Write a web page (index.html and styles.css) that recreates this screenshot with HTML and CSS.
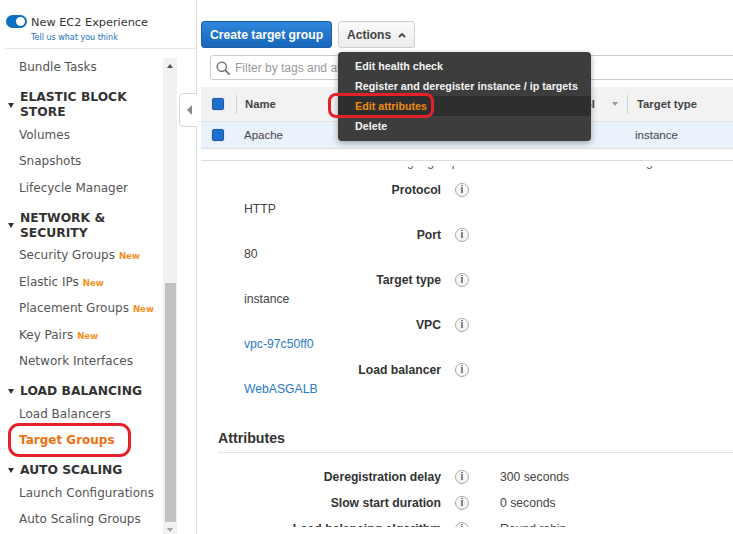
FILE: index.html
```html
<!DOCTYPE html>
<html>
<head>
<meta charset="utf-8">
<link rel="stylesheet" href="styles.css">
</head>
<body>
<div class="app">
  <aside class="sidebar">
    <div class="sb-top">
      <div class="sb-toggle-row">
        <span class="toggle"><span class="knob"></span></span>
        <span class="toggle-label">New EC2 Experience</span>
      </div>
      <div class="feedback">Tell us what you think</div>
    </div>
    <div class="sb-body">
      <nav class="sb-list">
        <div class="item">Bundle Tasks</div>
        <div class="sec"><span class="tri"></span><span class="sec-text">ELASTIC BLOCK STORE</span></div>
        <div class="item">Volumes</div>
        <div class="item">Snapshots</div>
        <div class="item">Lifecycle Manager</div>
        <div class="sec"><span class="tri"></span><span class="sec-text">NETWORK &amp; SECURITY</span></div>
        <div class="item">Security Groups<span class="new">New</span></div>
        <div class="item">Elastic IPs<span class="new">New</span></div>
        <div class="item">Placement Groups<span class="new">New</span></div>
        <div class="item">Key Pairs<span class="new">New</span></div>
        <div class="item">Network Interfaces</div>
        <div class="sec"><span class="tri"></span><span class="sec-text">LOAD BALANCING</span></div>
        <div class="item">Load Balancers</div>
        <div class="item active">Target Groups<span class="annot annot-sb"></span></div>
        <div class="sec"><span class="tri"></span><span class="sec-text">AUTO SCALING</span></div>
        <div class="item">Launch Configurations</div>
        <div class="item">Auto Scaling Groups</div>
      </nav>
      <div class="scrollbar">
        <div class="sc-arrow"><span class="sc-up"></span></div>
        <div class="sc-space"></div>
        <div class="sc-thumb"></div>
        <div class="sc-arrow"><span class="sc-down"></span></div>
      </div>
      <div class="sb-gap"></div>
    </div>
    <div class="collapse-tab"><span class="tab-tri"></span></div>
  </aside>

  <main class="main">
    <div class="toolbar">
      <button class="btn-primary">Create target group</button>
      <div class="actions-wrap">
        <button class="btn">Actions
          <svg class="caret" width="8" height="6" viewBox="0 0 8 6"><path d="M1 5 L4 2 L7 5" fill="none" stroke="#444" stroke-width="1.8"/></svg>
        </button>
        <div class="menu">
          <div class="menu-item">Edit health check</div>
          <div class="menu-item">Register and deregister instance / ip targets</div>
          <div class="menu-item hover">Edit attributes<span class="annot annot-menu"></span></div>
          <div class="menu-item">Delete</div>
        </div>
      </div>
    </div>

    <div class="filter-row">
      <div class="filter">
        <svg class="search" width="14" height="14" viewBox="0 0 14 14"><circle cx="5.8" cy="5.8" r="4.6" fill="none" stroke="#777" stroke-width="1.5"/><path d="M9.2 9.2 L13 13" stroke="#777" stroke-width="1.8" stroke-linecap="round"/></svg>
        <span class="filter-text">Filter by tags and attributes or search by keyword</span>
      </div>
    </div>

    <div class="table">
      <div class="thead">
        <div class="c-check"><span class="checkbox"></span></div>
        <div class="c-name"><span class="divider"></span><span class="th-text">Name</span></div>
        <div class="c-proto"><span class="divider"></span><span class="th-text">Protocol</span><span class="sort"></span></div>
        <div class="c-type"><span class="divider"></span><span class="th-text">Target type</span></div>
      </div>
      <div class="trow">
        <div class="c-check"><span class="checkbox"></span></div>
        <div class="c-name td">Apache</div>
        <div class="c-proto td">HTTP</div>
        <div class="c-type td">instance</div>
      </div>
    </div>

    <div class="details">
      <div class="clip-window"><div class="clip-row">Target group ARN &nbsp; arn:aws:elasticloadbalancing:us-east-1:targetgroup/Apache/9d</div></div>
      <div class="field first">
        <div class="field-label"><span class="label">Protocol</span><span class="info">i</span></div>
        <div class="field-value">HTTP</div>
      </div>
      <div class="field">
        <div class="field-label"><span class="label">Port</span><span class="info">i</span></div>
        <div class="field-value">80</div>
      </div>
      <div class="field">
        <div class="field-label"><span class="label">Target type</span><span class="info">i</span></div>
        <div class="field-value">instance</div>
      </div>
      <div class="field">
        <div class="field-label"><span class="label">VPC</span><span class="info">i</span></div>
        <div class="field-value"><a class="link">vpc-97c50ff0</a></div>
      </div>
      <div class="field">
        <div class="field-label"><span class="label">Load balancer</span><span class="info">i</span></div>
        <div class="field-value"><a class="link">WebASGALB</a></div>
      </div>

      <h3 class="attr-title">Attributes</h3>
      <div class="attrs">
        <div class="attr-row"><span class="label">Deregistration delay</span><span class="info">i</span><span class="attr-val">300 seconds</span></div>
        <div class="attr-row"><span class="label">Slow start duration</span><span class="info">i</span><span class="attr-val">0 seconds</span></div>
        <div class="attr-row"><span class="label">Load balancing algorithm</span><span class="info">i</span><span class="attr-val">Round robin</span></div>
      </div>
    </div>
  </main>
</div>
</body>
</html>
```

FILE: styles.css
```css
* { box-sizing: border-box; }
html, body { margin: 0; padding: 0; }
body {
  width: 733px;
  height: 534px;
  overflow: hidden;
  background: #fff;
  font-family: "Liberation Sans", Arial, sans-serif;
  color: #444;
}
.app { display: flex; height: 534px; }

/* ---------- sidebar ---------- */
.sidebar {
  width: 197px;
  flex: none;
  border-right: 1px solid #dcdcdc;
  position: relative;
  display: flex;
  flex-direction: column;
  font-family: "DejaVu Sans", Verdana, sans-serif;
}
.sb-top {
  height: 49px;
  margin-left: 5px;
  padding-top: 15px;
  border-bottom: 1px solid #e6e6e6;
  flex: none;
}
.sb-toggle-row { display: flex; align-items: center; height: 13px; }
.toggle {
  width: 21px; height: 13px; margin-left: 1px;
  border-radius: 7px; background: #0b6fc1;
  display: flex; align-items: center; justify-content: flex-end;
  padding-right: 2px;
}
.knob { width: 9px; height: 9px; border-radius: 50%; background: #fff; }
.toggle-label { margin-left: 4px; font-size: 11.3px; color: #333; margin-top: 2px; }
.feedback { margin: 4px 0 0 26px; font-size: 8px; line-height: 12px; color: #1b6ec2; }

.sb-body { display: flex; flex: 1; min-height: 0; }
.sb-list { width: 163px; flex: none; padding-top: 5px; overflow: hidden; }
.item {
  height: 26.5px;
  display: flex; align-items: center;
  padding-left: 19px;
  font-size: 12px;
  color: #555;
  white-space: nowrap;
}
.item.active { color: #ec7211; font-weight: bold; position: relative; }
.new { color: #f7901e; font-weight: bold; font-size: 8.6px; margin-left: 4px; margin-top: 2px; }
.sec {
  display: flex; align-items: center;
  padding-left: 8px;
  margin: 9.5px 0 1.5px;
  font-size: 12.3px; line-height: 15px;
  font-weight: bold; color: #333;
}
.tri {
  width: 0; height: 0; flex: none;
  border-left: 3.5px solid transparent;
  border-right: 3.5px solid transparent;
  border-top: 5px solid #333;
  margin-right: 6px;
}
.sec-text { max-width: 140px; }

.annot { position: absolute; border: 3px solid #e4202a; pointer-events: none; }
.annot-sb { left: 8px; top: -4px; width: 123px; height: 34px; border-radius: 11px; }

.scrollbar {
  width: 14px; flex: none;
  margin-top: 9px;
  background: #f1f1f1;
  display: flex; flex-direction: column; align-items: center;
}
.sc-arrow { height: 16px; width: 14px; display: flex; align-items: center; justify-content: center; flex: none; }
.sc-up { width: 0; height: 0; border-left: 3.5px solid transparent; border-right: 3.5px solid transparent; border-bottom: 4px solid #505050; }
.sc-down { width: 0; height: 0; border-left: 3.5px solid transparent; border-right: 3.5px solid transparent; border-top: 4px solid #a3a3a3; }
.sc-space { height: 209px; flex: none; }
.sc-thumb { width: 11px; height: 239px; background: #c1c1c1; flex: none; }
.sb-gap { flex: 1; }

.collapse-tab {
  position: absolute;
  right: -1px; top: 93px;
  width: 18px; height: 34px;
  background: #fff;
  border: 1px solid #d6d6d6;
  border-right: none;
  border-radius: 5px 0 0 5px;
  display: flex; align-items: center; justify-content: center;
}
.tab-tri { width: 0; height: 0; border-top: 5px solid transparent; border-bottom: 5px solid transparent; border-right: 5px solid #8a8a8a; margin-left: 1px; }

/* ---------- main ---------- */
.main { flex: 1; min-width: 0; padding-left: 4px; padding-bottom: 7px; display: flex; flex-direction: column; overflow: hidden; }
.toolbar { display: flex; gap: 6px; padding-top: 21px; position: relative; z-index: 5; flex: none; }
.btn-primary {
  height: 27px; padding: 0 8px;
  background: linear-gradient(#2f87db, #1766ba);
  border: 1px solid #1a5fa8; border-radius: 3px;
  color: #fff; font: bold 12.2px "Liberation Sans", Arial, sans-serif;
}
.actions-wrap { position: relative; }
.btn {
  height: 27px; padding: 0 8px;
  background: linear-gradient(#fbfbfb, #ececec);
  border: 1px solid #cfcfcf; border-radius: 3px;
  color: #444; font: bold 12px "Liberation Sans", Arial, sans-serif;
  display: flex; align-items: center;
}
.caret { margin-left: 7px; }
.menu {
  position: absolute; left: 0; top: 31px;
  width: 253px;
  padding: 4px 0 5px;
  background: #3d3d3d;
  border-radius: 4px;
  box-shadow: 0 2px 6px rgba(0,0,0,.35);
  z-index: 10;
}
.menu-item {
  position: relative;
  line-height: 20px; height: 20px;
  padding-left: 17px;
  color: #f4f4f4;
  font-weight: bold; font-size: 10.7px;
  white-space: nowrap;
}
.menu-item.hover { background: #2e2e2e; color: #ee8b0e; }
.annot-menu { left: -10px; top: -3px; width: 106px; height: 25px; border-radius: 8px; }

.filter-row { padding: 7px 0 0 9px; flex: none; }
.filter {
  width: 560px; height: 25px;
  border: 1px solid #cccccc; border-radius: 3px;
  display: flex; align-items: center;
  padding-left: 5px;
  background: #fff;
}
.search { flex: none; }
.filter-text { margin-left: 5px; font-size: 12px; color: #9a9a9a; white-space: nowrap; }

.table { margin-top: 7px; width: 560px; flex: none; }
.thead, .trow { display: flex; align-items: center; }
.thead { height: 35px; background: #f2f2f2; border-bottom: 1px solid #e2e2e2; font-weight: bold; font-size: 11.3px; color: #444; }
.trow { height: 27px; background: #eaf2fc; border-bottom: 1px solid #dedede; font-size: 11.5px; color: #444; }
.c-check { width: 35px; flex: none; padding-left: 11px; display: flex; align-items: center; }
.c-name { width: 304px; flex: none; display: flex; align-items: center; }
.c-proto { width: 87px; flex: none; display: flex; align-items: center; }
.c-type { flex: 1; display: flex; align-items: center; white-space: nowrap; }
.td { padding-left: 8px; }
.divider { width: 1px; height: 19px; background: #cfcfcf; flex: none; }
.th-text { margin-left: 8px; }
.c-type .th-text { margin-left: 9px; }
.sort { width: 0; height: 0; border-left: 3px solid transparent; border-right: 3px solid transparent; border-top: 4px solid #999; margin-left: 17px; }
.checkbox {
  width: 12px; height: 12px;
  background: #1f6fcc;
  border: 1px solid #1a5aa6;
  border-radius: 2px;
  box-shadow: 0 0 0 1px #dfe6ee;
}

.details {
  margin-top: 11px;
  border-top: 1px solid #dddddd;
  flex: 1;
  min-height: 0;
  overflow: hidden;
  font-size: 12.2px;
}
.clip-window { margin-top: 5px; height: 6px; overflow: hidden; }
.clip-row {
  margin-top: -13px;
  height: 18px; line-height: 18px;
  padding-left: 189px;
  width: 466px;
  white-space: nowrap; overflow: hidden;
  color: #555;
}
.field.first { margin-top: 8.5px; }
.field-label { display: flex; align-items: center; height: 19px; }
.label { width: 240px; flex: none; text-align: right; font-weight: bold; color: #333; white-space: nowrap; }
.info {
  width: 14px; height: 14px; flex: none;
  margin-left: 14px;
  border: 1px solid #a8a8a8; border-radius: 50%;
  background: linear-gradient(#ffffff, #f0f0f0);
  font: bold 10px/12px "Liberation Sans", Arial, sans-serif;
  color: #555; text-align: center;
}
.field-value { padding-left: 43px; line-height: 18px; margin-bottom: 8px; color: #444; }
.link { color: #2b79c9; text-decoration: none; }

.attr-title {
  margin: 30.5px 0 0 17px;
  padding-bottom: 4px;
  line-height: 20px;
  font-size: 14.2px; font-weight: bold; color: #333;
  border-bottom: 1px solid #e3e3e3;
}
.attrs { margin-top: 11px; }
.attr-row { display: flex; align-items: center; height: 26px; }
.attr-val { margin-left: 31px; color: #444; white-space: nowrap; }
```
